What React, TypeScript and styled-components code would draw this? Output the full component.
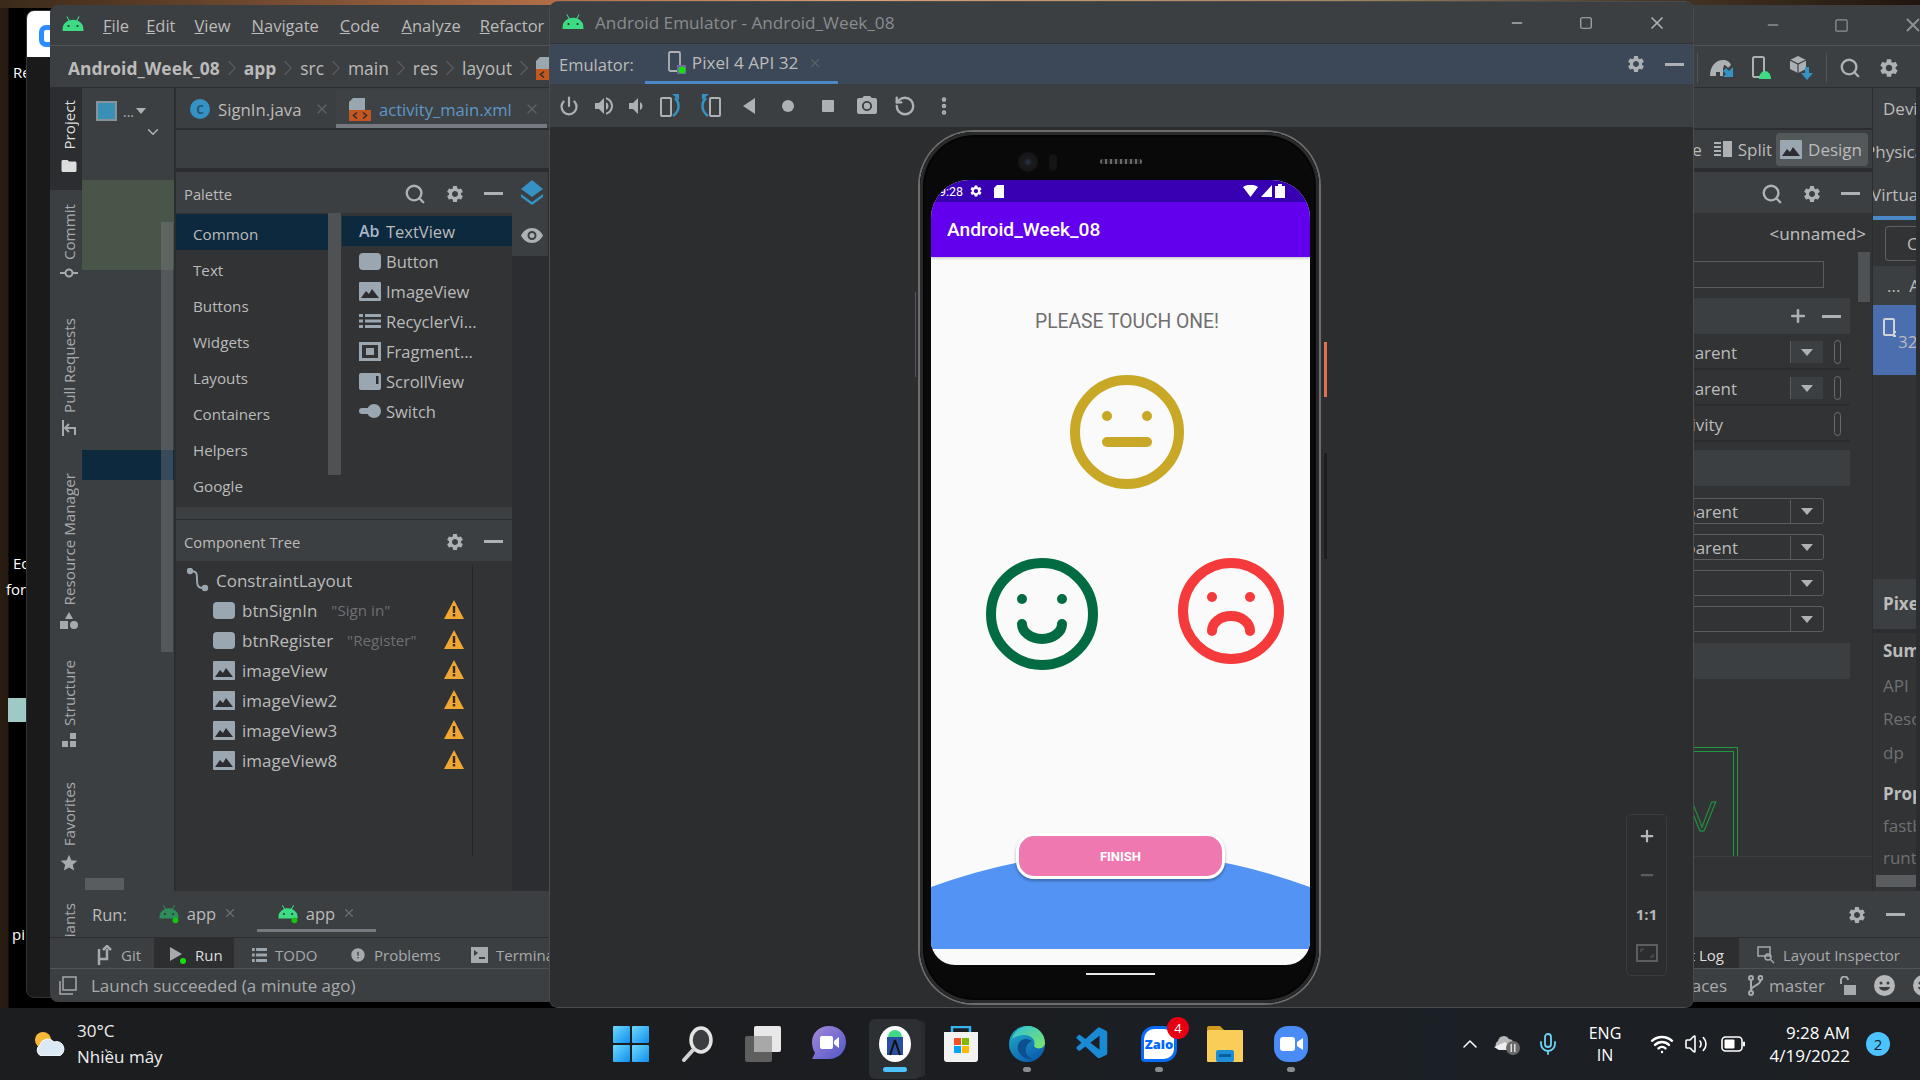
import React from 'react'
import styled, { createGlobalStyle } from 'styled-components'
import { Search, X, Minus, Plus, Square, ChevronRight, ChevronDown, ChevronUp, Power, RotateCcw, MoreVertical, Mic, Wifi, Volume2 } from 'lucide-react'
import { MdSettings, MdFolder, MdStar, MdVolumeUp, MdVolumeDown, MdPhotoCamera, MdError } from 'react-icons/md'
import { VscVscode } from 'react-icons/vsc'

const ui = '"Open Sans", "Noto Sans", "Liberation Sans", sans-serif'

const GlobalStyle = createGlobalStyle`
  html, body { margin: 0; padding: 0; background: #000; }
  body { width: 1920px; height: 1080px; overflow: hidden; font-family: ${ui}; }
  * { box-sizing: border-box; }
  svg { flex: none; }
`

const Screen = styled.div`
  width: 1920px;
  height: 1080px;
  display: flex;
  flex-direction: column;
  overflow: hidden;
`
const Desktop = styled.div`
  position: relative;
  flex: 1;
  overflow: hidden;
  background: linear-gradient(90deg, #2a1d12 0, #241a10 8px, #000 9px, #000 100%);
`
const Glow = styled.div`
  position: absolute;
  left: 0;
  top: 0;
  width: 100%;
  height: 8px;
  background: linear-gradient(90deg, #3a2a1a 0, #b5714a 30%, #d8a078 45%, #a58660 70%, #4a3a28 85%, #20160f 100%);
`
const DeskLabel = styled.span<{ $x: number; $y: number }>`
  position: absolute;
  left: ${(p) => p.$x}px;
  top: ${(p) => p.$y}px;
  color: #fff;
  font-size: 15px;
  line-height: 20px;
`
const DeskTile = styled.div`
  position: absolute;
  left: 8px;
  top: 698px;
  width: 18px;
  height: 24px;
  background: #9ec9c4;
`
const BackWindow = styled.div`
  position: absolute;
  left: 26px;
  top: 10px;
  width: 60px;
  height: 988px;
  border-radius: 8px;
  background: #1a1a1a;
  border: 1px solid #333;
  overflow: hidden;
`
const BackHead = styled.div`
  height: 46px;
  background: #fff;
  padding: 14px 0 0 12px;
`
const BackLogo = styled.div`
  width: 24px;
  height: 22px;
  border: 5px solid #2d8cff;
  border-radius: 7px;
`
const Window = styled.div`
  position: absolute;
  border-radius: 8px;
  overflow: hidden;
  display: flex;
  flex-direction: column;
  color: #bbb;
`
const IdeWindow = styled(Window)`
  left: 50px;
  top: 5px;
  width: 1880px;
  height: 997px;
  background: #3c3f41;
`
const EmuWindow = styled(Window)`
  left: 550px;
  top: 2px;
  width: 1143px;
  height: 1005px;
  background: #2b2d2f;
  box-shadow: 0 0 0 1px #4a4c4e;
`
const MenuBar = styled.div`
  height: 41px;
  display: flex;
  align-items: center;
  padding: 0 0 0 11px;
  border-bottom: 1px solid #515456;
  flex: none;
`
const MenuItem = styled.span<{ $left: number }>`
  margin-left: ${(p) => p.$left}px;
  font-size: 16.5px;
  color: #bbb;
  white-space: nowrap;
  &::first-letter { text-decoration: underline; }
`
const WinControls = styled.div`
  margin-left: auto;
  display: flex;
  align-items: center;
  gap: 53px;
  padding-right: 6px;
  flex: none;
  color: #8f9294;
`
const Crumbs = styled.div`
  height: 42px;
  display: flex;
  align-items: center;
  padding: 3px 0 0 18px;
  flex: none;
  font-size: 17.4px;
  border-bottom: 1px solid #2b2d30;
`
const Crumb = styled.span<{ $bold?: boolean }>`
  font-weight: ${(p) => (p.$bold ? 700 : 400)};
  color: #bbb;
  white-space: nowrap;
`
const Chevron = styled(ChevronRight)`
  color: #5b5e60;
  margin: 0 -1px;
`
const RightTools = styled.div`
  margin-left: auto;
  display: flex;
  align-items: center;
  height: 100%;
  width: 233px;
  color: #aeb1b3;
  flex: none;
`
const ToolSep = styled.div`
  width: 1px;
  height: 30px;
  background: #515456;
  flex: none;
`
const ToolItem = styled.span<{ $left: number }>`
  margin-left: ${(p) => p.$left}px;
  display: flex;
  flex: none;
`
const WhiteBit = styled.span`
  margin-left: 20px;
  width: 6px;
  height: 24px;
  background: #dfdfdf;
  flex: none;
`
const Workspace = styled.div`
  flex: 1;
  display: flex;
  min-height: 0;
`
const Rail = styled.div`
  width: 32px;
  flex: none;
  display: flex;
  flex-direction: column;
  overflow: hidden;
`
const RailTab = styled.div<{ $active?: boolean; $pad: number; $h: number }>`
  width: 100%;
  height: ${(p) => p.$h}px;
  flex: none;
  padding: ${(p) => p.$pad}px 0 0 5px;
  display: flex;
  flex-direction: column;
  align-items: center;
  gap: 7px;
  background: ${(p) => (p.$active ? '#2b2d30' : 'transparent')};
  color: ${(p) => (p.$active ? '#ddd' : '#a7aaac')};
`
const RailLabel = styled.span`
  writing-mode: vertical-rl;
  transform: rotate(180deg);
  font-size: 15.2px;
  line-height: 18px;
  white-space: nowrap;
`
const WorkMain = styled.div`
  flex: 1;
  min-width: 0;
  display: flex;
  flex-direction: column;
`
const Panels = styled.div`
  height: 803px;
  display: flex;
  background: #2b2d30;
  flex: none;
`
const ProjectPanel = styled.div`
  width: 92px;
  position: relative;
  flex: none;
  background: #3c3f41;
`
const ProjectBar = styled.div`
  height: 92px;
  display: flex;
  flex-direction: column;
  padding: 13px 8px 0 14px;
  color: #aeb1b3;
`
const ProjectTools = styled.div`
  display: flex;
  align-items: center;
  gap: 6px;
  font-size: 14px;
`
const ProjectMore = styled(ChevronDown)`
  align-self: flex-end;
  margin: 2px 4px 0 0;
`
const ProjectIcon = styled.div`
  width: 21px;
  height: 20px;
  border: 2px solid #87939a;
  background: #3a8fb7;
  flex: none;
`
const TinyCaret = styled.span`
  width: 0;
  height: 0;
  border-left: 5px solid transparent;
  border-right: 5px solid transparent;
  border-top: 6px solid #aeb1b3;
  margin-left: -4px;
`
const GreenBand = styled.div`
  height: 90px;
  background: #4a5549;
`
const SelBand = styled.div`
  height: 30px;
  margin-top: 180px;
  background: #0d293e;
`
const ProjectScroll = styled.div`
  position: absolute;
  left: 79px;
  top: 134px;
  width: 12px;
  height: 430px;
  background: rgba(120, 125, 128, 0.42);
`
const ProjectHScroll = styled.div`
  position: absolute;
  left: 3px;
  bottom: 1px;
  width: 39px;
  height: 12px;
  background: #5a5d5f;
`
const Editor = styled.div`
  flex: 1;
  min-width: 0;
  margin-left: 2px;
  display: flex;
  flex-direction: column;
  background: #3c3f41;
`
const TabBar = styled.div`
  height: 42px;
  display: flex;
  flex: none;
  padding-top: 2px;
  background: #3c3f41;
  border-bottom: 2px solid #2b2d30;
`
const Tab = styled.div<{ $active?: boolean; $w: number }>`
  width: ${(p) => p.$w}px;
  display: flex;
  align-items: center;
  padding: 4px 0 0 ${(p) => (p.$active ? 13 : 14)}px;
  gap: 8px;
  font-size: ${(p) => (p.$active ? 16.6 : 16.8)}px;
  color: ${(p) => (p.$active ? '#5d97c9' : '#bbb')};
  border-bottom: 4px solid ${(p) => (p.$active ? '#747a80' : 'transparent')};
  background: ${(p) => (p.$active ? '#3f4244' : 'transparent')};
  flex: none;
  white-space: nowrap;
`
const ClassBadge = styled.span`
  width: 20px;
  height: 20px;
  border-radius: 50%;
  background: #3592c4;
  color: #27566f;
  font-size: 12px;
  font-weight: 700;
  display: flex;
  align-items: center;
  justify-content: center;
  flex: none;
`
const TabClose = styled(X)`
  color: #5e6163;
  margin-left: 4px;
`
const SubBar = styled.div`
  height: 40px;
  flex: none;
  display: flex;
  align-items: center;
  justify-content: flex-end;
  padding: 0 4px 0 0;
  border-bottom: 2px solid #2b2d30;
  font-size: 17px;
`
const ModeBtn = styled.div<{ $active?: boolean }>`
  display: flex;
  align-items: center;
  gap: 6px;
  height: 33px;
  padding: ${(p) => (p.$active ? '0 6px 0 4px' : '0 4px 0 8px')};
  border-radius: 4px;
  background: ${(p) => (p.$active ? '#53585b' : 'transparent')};
  white-space: nowrap;
`
const DesignRow = styled.div`
  flex: 1;
  display: flex;
  min-height: 0;
  padding-top: 2px;
  background: #2b2d30;
`
const PaletteCol = styled.div`
  width: 336px;
  flex: none;
  display: flex;
  flex-direction: column;
  background: #313335;
`
const PanelHead = styled.div`
  height: 41px;
  flex: none;
  display: flex;
  align-items: center;
  padding: 2px 9px 0 8px;
  background: #3c3f41;
  color: #bbb;
  font-size: 14.8px;
  gap: 19px;
`
const HeadTitle = styled.span`
  margin-right: auto;
`
const Dash = styled.span`
  width: 19px;
  height: 3px;
  background: #aeb1b3;
  flex: none;
`
const PaletteBody = styled.div`
  height: 294px;
  flex: none;
  display: flex;
`
const CatList = styled.div`
  width: 152px;
  flex: none;
  padding-top: 1px;
  display: flex;
  flex-direction: column;
`
const Cat = styled.div<{ $active?: boolean }>`
  height: 36px;
  flex: none;
  display: flex;
  align-items: center;
  padding: 3px 0 0 17px;
  font-size: 15.2px;
  background: ${(p) => (p.$active ? '#0d293e' : 'transparent')};
`
const PalScroll = styled.div`
  width: 13px;
  height: 262px;
  flex: none;
  background: #4e5254;
`
const ItemList = styled.div`
  flex: 1;
  padding: 3px 0 0 1px;
  display: flex;
  flex-direction: column;
`
const Item = styled.div<{ $active?: boolean }>`
  height: 30px;
  flex: none;
  display: flex;
  align-items: center;
  padding-left: 17px;
  gap: 5px;
  font-size: 16.5px;
  white-space: nowrap;
  background: ${(p) => (p.$active ? '#0d293e' : 'transparent')};
`
const AbMark = styled.span`
  width: 22px;
  font-weight: 600;
  font-size: 16px;
  color: #a9b7c6;
`
const PalGap = styled.div`
  height: 13px;
  flex: none;
  background: #3c3f41;
  border-bottom: 1px solid #2b2d30;
`
const TreeBody = styled.div`
  flex: 1;
  padding: 4px 39px 35px 0;
`
const TreeInner = styled.div`
  height: 100%;
  border-right: 1px solid #232527;
`
const TreeRow = styled.div<{ $indent: number }>`
  height: 30px;
  display: flex;
  align-items: center;
  padding-left: ${(p) => p.$indent}px;
  gap: 7px;
  font-size: 17px;
  position: relative;
  white-space: nowrap;
`
const TreeHint = styled.span`
  font-size: 15.2px;
  color: #6e7072;
  margin-left: 7px;
`
const WarnSlot = styled.svg`
  position: absolute;
  left: 268px;
  top: 5px;
`
const IconCol = styled.div`
  width: 36px;
  flex: none;
  display: flex;
  flex-direction: column;
  background: #3c3f41;
  height: 84px;
  align-items: center;
  padding: 8px 0 0 3px;
  gap: 22px;
`
const Canvas = styled.div`
  flex: 1;
`
const AttrPanel = styled.div`
  width: 370px;
  flex: none;
  position: relative;
  display: flex;
  flex-direction: column;
  background: #313335;
`
const AttrHead = styled(PanelHead)`
  justify-content: flex-end;
  padding-right: 12px;
  gap: 19px;
`
const Unnamed = styled.div`
  height: 39px;
  flex: none;
  display: flex;
  align-items: center;
  justify-content: flex-end;
  padding: 2px 6px 0 0;
  font-size: 17px;
  font-family: "Noto Sans", sans-serif;
`
const AttrSearch = styled.div`
  height: 27px;
  margin: 9px 48px 0 0;
  flex: none;
  border: 1px solid #5a5d5f;
`
const AttrScroll = styled.div`
  position: absolute;
  right: 2px;
  top: 80px;
  width: 12px;
  height: 50px;
  background: #4e5254;
`
const Band = styled.div<{ $top: number }>`
  height: 36px;
  margin: ${(p) => p.$top}px 22px 0 0;
  background: #3c3f41;
  flex: none;
  display: flex;
  align-items: center;
  justify-content: flex-end;
  padding-right: 9px;
  gap: 14px;
  color: #aeb1b3;
`
const AttrRow = styled.div`
  height: 36px;
  margin-right: 22px;
  flex: none;
  display: flex;
  align-items: center;
  border-bottom: 2px solid #2b2d30;
  font-size: 17px;
  padding: 2px 0 0 125px;
`
const AttrValue = styled.span`
  width: 163px;
  flex: none;
`
const DropChip = styled.div`
  width: 33px;
  height: 22px;
  flex: none;
  background: #3c3f41;
  border-left: 1px solid #5a5d5f;
  display: flex;
  align-items: center;
  justify-content: center;
`
const NoChip = styled.span`
  width: 33px;
  flex: none;
`
const Caret = styled.span`
  width: 0;
  height: 0;
  border-left: 6px solid transparent;
  border-right: 6px solid transparent;
  border-top: 7px solid #aeb1b3;
`
const Pill = styled.span`
  width: 7px;
  height: 24px;
  margin-left: 11px;
  flex: none;
  border: 1px solid #6a6d6f;
  border-radius: 4px;
`
const SelectRow = styled.div<{ $top?: number }>`
  height: 26px;
  margin: ${(p) => p.$top ?? 10}px 48px 0 0;
  flex: none;
  display: flex;
  align-items: center;
  justify-content: space-between;
  padding: 1px 0 0 125px;
  border: 1px solid #5a5d5f;
  border-radius: 3px;
  font-size: 17px;
`
const SelectChip = styled(DropChip)`
  height: 100%;
  background: transparent;
`
const Blueprint = styled.div`
  position: absolute;
  left: 136px;
  top: 575px;
  width: 100px;
  height: 109px;
  border: 1px solid #1f9a3e;
  border-width: 1px 1px 0 0;
  &::after {
    content: '';
    position: absolute;
    left: 0;
    top: 3px;
    width: 95px;
    height: 105px;
    border: 1px solid #1f9a3e;
    border-width: 1px 1px 0 0;
  }
`
const BlueprintV = styled.span`
  position: absolute;
  left: 50px;
  top: 44px;
  font-size: 42px;
  line-height: 50px;
  font-family: "Liberation Sans", sans-serif;
  -webkit-text-stroke: 1px #1f9a3e;
  color: transparent;
`
const BottomLine = styled.div`
  position: absolute;
  left: 0;
  right: 0;
  top: 684px;
  height: 1px;
  background: #3c3f41;
`
const DevicePanel = styled.div`
  width: 43px;
  margin: 0 14px 0 1px;
  flex: none;
  display: flex;
  flex-direction: column;
  overflow: hidden;
  font-size: 17px;
  background: #313335;
  white-space: nowrap;
`
const DevLine = styled.div<{ $h: number; $dim?: boolean; $bold?: boolean; $x?: number; $band?: boolean }>`
  height: ${(p) => p.$h}px;
  line-height: ${(p) => p.$h}px;
  flex: none;
  text-indent: ${(p) => p.$x ?? 10}px;
  color: ${(p) => (p.$dim ? '#6e7072' : '#bbb')};
  font-weight: ${(p) => (p.$bold ? 700 : 400)};
  background: ${(p) => (p.$band ? '#3c3f41' : 'transparent')};
`
const DevUnder = styled.div`
  height: 4px;
  flex: none;
  background: #4a88c7;
`
const DevBtn = styled.div`
  height: 35px;
  margin: 6px 0 5px 12px;
  padding-left: 21px;
  flex: none;
  border: 1px solid #5e6163;
  border-right: 0;
  border-radius: 4px 0 0 4px;
  display: flex;
  align-items: center;
`
const DevSel = styled.div`
  height: 70px;
  flex: none;
  background: #4b6eaf;
  padding: 13px 0 0 10px;
  display: flex;
  gap: 2px;
  color: #bbb;
`
const DevSelNum = styled.span`
  margin-top: 12px;
`
const DevBlank = styled.div<{ $h: number; $dark?: boolean }>`
  height: ${(p) => p.$h}px;
  flex: none;
  background: ${(p) => (p.$dark ? '#2b2d30' : 'transparent')};
`
const DevScroll = styled.div`
  height: 12px;
  margin-left: 3px;
  flex: none;
  background: #5a5d5f;
`
const RunBar = styled.div`
  height: 39px;
  margin-top: 2px;
  flex: none;
  display: flex;
  align-items: center;
  padding-left: 10px;
  font-size: 16.5px;
`
const RunLabel = styled.span`
  padding-top: 4px;
`
const RunTab = styled.div<{ $active?: boolean; $left: number }>`
  margin-left: ${(p) => p.$left}px;
  height: 100%;
  width: 119px;
  padding: 4px 0 0 20px;
  flex: none;
  display: flex;
  align-items: center;
  gap: 7px;
  border-bottom: 3px solid ${(p) => (p.$active ? '#747a80' : 'transparent')};
`
const RunRight = styled.div`
  margin-left: auto;
  margin-right: 23px;
  padding-top: 4px;
  width: 60px;
  display: flex;
  align-items: center;
  gap: 19px;
  color: #aeb1b3;
`
const ToolStrip = styled.div`
  height: 32px;
  flex: none;
  display: flex;
  align-items: center;
  padding-left: 47px;
  font-size: 15px;
  border-top: 1px solid #2b2d30;
  border-bottom: 1px solid #515456;
  color: #a7aaac;
`
const ToolBtn = styled.div<{ $active?: boolean; $w: number; $pad?: number }>`
  width: ${(p) => p.$w}px;
  height: 100%;
  flex: none;
  display: flex;
  align-items: center;
  gap: 8px;
  padding: 3px 0 0 ${(p) => p.$pad ?? 0}px;
  background: ${(p) => (p.$active ? '#2c2e30' : 'transparent')};
  color: ${(p) => (p.$active ? '#ddd' : '#a7aaac')};
  white-space: nowrap;
`
const StripRight = styled.div`
  margin-left: auto;
  width: 280px;
  height: 100%;
  display: flex;
  align-items: center;
  padding-top: 3px;
`
const StripCell = styled.div`
  align-self: stretch;
  margin-top: -3px;
  width: 89px;
  padding: 3px 15px 0 0;
  background: #2c2e30;
  display: flex;
  align-items: center;
  justify-content: flex-end;
  color: #ddd;
  flex: none;
  white-space: nowrap;
  margin-right: 18px;
`
const StripText = styled.span`
  margin-left: 8px;
  white-space: nowrap;
`
const StatusBar = styled.div`
  height: 33px;
  flex: none;
  display: flex;
  align-items: center;
  padding: 0 0 0 9px;
  font-size: 17px;
  color: #a7aaac;
`
const StatusText = styled.span`
  margin-left: 14px;
`
const StatusRight = styled.div`
  margin-left: auto;
  width: 280px;
  display: flex;
  align-items: center;
  white-space: nowrap;
`
const SpacesText = styled.span`
  width: 77px;
  text-align: right;
  flex: none;
  margin-right: 21px;
`
const MasterText = styled.span`
  margin: 0 14px 0 6px;
`
const StatusFace = styled.span`
  margin-left: 18px;
  display: flex;
`
const EmuTitle = styled.div`
  height: 42px;
  flex: none;
  display: flex;
  align-items: center;
  padding-left: 11px;
  gap: 10px;
  font-size: 17.2px;
  color: #888c90;
  background: #3c3f41;
  border-bottom: 1px solid #323436;
`
const EmuWinCtl = styled.div`
  margin-left: auto;
  display: flex;
  align-items: center;
  gap: 54px;
  padding-right: 26px;
  color: #aeb1b3;
`
const EmuTabs = styled.div`
  height: 40px;
  flex: none;
  display: flex;
  align-items: center;
  padding-left: 9px;
  font-size: 16.5px;
  background: #3c4858;
  color: #bbb;
`
const EmuTab = styled.div`
  width: 193px;
  height: 100%;
  margin-left: 11px;
  padding-left: 23px;
  flex: none;
  display: flex;
  align-items: center;
  gap: 6px;
  font-size: 17.2px;
  white-space: nowrap;
  border-bottom: 3px solid #4a88c7;
`
const EmuTabRight = styled.div`
  margin-left: auto;
  padding-right: 9px;
  display: flex;
  align-items: center;
  gap: 19px;
  color: #aeb1b3;
`
const EmuTools = styled.div`
  height: 43px;
  flex: none;
  display: flex;
  align-items: center;
  padding-left: 8px;
  background: #3c3f41;
  color: #aeb1b3;
`
const ToolSlot = styled.span<{ $left?: number }>`
  width: 22px;
  height: 22px;
  margin-left: ${(p) => p.$left ?? 17}px;
  flex: none;
  display: flex;
  align-items: center;
  justify-content: center;
  color: #aeb1b3;
`
const DeviceArea = styled.div`
  flex: 1;
  position: relative;
  display: flex;
  justify-content: center;
  padding: 5px 4px 0 0;
  background: #2b2d2f;
  min-height: 0;
`
const ZoomBox = styled.div`
  position: absolute;
  right: 26px;
  top: 687px;
  width: 41px;
  height: 162px;
  border: 1px solid #3a3c3e;
  border-radius: 5px;
  display: flex;
  flex-direction: column;
  align-items: center;
  color: #b5b7b9;
`
const ZoomCell = styled.div<{ $dim?: boolean }>`
  height: 39px;
  flex: none;
  width: 100%;
  display: flex;
  align-items: center;
  justify-content: center;
  padding-top: 3px;
  font-size: 15px;
  font-weight: 700;
  color: ${(p) => (p.$dim ? '#5c5e60' : '#b5b7b9')};
`
const Phone = styled.div`
  position: relative;
  width: 399px;
  height: 871px;
  flex: none;
  padding: 48px 9px 0 11px;
  border-radius: 54px;
  background: #090909;
  box-shadow: 0 0 0 2px #6b6d6f, inset 0 0 0 3px #2a2a2b, inset 0 0 0 5px #050505;
`
const SideKey = styled.div<{ $top: number; $h: number; $orange?: boolean }>`
  position: absolute;
  left: 404px;
  top: ${(p) => p.$top}px;
  width: 3px;
  height: ${(p) => p.$h}px;
  background: ${(p) => (p.$orange ? '#df7150' : '#1c1d1e')};
`
const LeftEdge = styled.div`
  position: absolute;
  left: -5px;
  top: 160px;
  width: 1px;
  height: 85px;
  background: #55585a;
`
const Lens = styled.div`
  position: absolute;
  left: 98px;
  top: 20px;
  width: 20px;
  height: 20px;
  border-radius: 50%;
  background: radial-gradient(circle, #2a3550 0, #1a1a1c 30%, #121214 100%);
`
const LensTwo = styled.div`
  position: absolute;
  left: 129px;
  top: 22px;
  width: 8px;
  height: 17px;
  border-radius: 4px;
  background: #141416;
`
const Speaker = styled.div`
  position: absolute;
  left: 180px;
  top: 27px;
  width: 42px;
  height: 5px;
  border-radius: 3px;
  background: repeating-linear-gradient(90deg, #6a6a6a 0 2px, #1c1c1c 2px 5px);
`
const PhoneScreen = styled.div`
  width: 379px;
  height: 785px;
  border-radius: 38px 38px 24px 24px;
  overflow: hidden;
  display: flex;
  flex-direction: column;
  background: #fafafa;
  font-family: Roboto, sans-serif;
`
const AndroidStatus = styled.div`
  height: 22px;
  flex: none;
  background: #3700b3;
  color: #fff;
  display: flex;
  align-items: center;
  padding-left: 8px;
  font-size: 12.5px;
  gap: 6px;
`
const SdIcon = styled.svg`
  margin-left: 5px;
`
const StatusIcons = styled.div`
  margin-left: auto;
  padding-right: 25px;
  display: flex;
  align-items: center;
  gap: 3px;
`
const AppBar = styled.div`
  height: 55px;
  flex: none;
  background: #6200ee;
  color: #fff;
  display: flex;
  align-items: center;
  padding-left: 16px;
  font-size: 19.2px;
  font-weight: 500;
  box-shadow: 0 1px 3px rgba(0, 0, 0, 0.25);
`
const Content = styled.div`
  flex: 1;
  display: flex;
  flex-direction: column;
  align-items: center;
  padding: 54px 0 0 13px;
`
const Prompt = styled.div`
  font-size: 19.3px;
  line-height: 22px;
  color: #6f6f6f;
  white-space: nowrap;
`
const NeutralSlot = styled.div`
  margin-top: 42px;
  display: flex;
  flex: none;
`
const FaceRow = styled.div`
  align-self: flex-start;
  margin: 69px 0 0 42px;
  display: flex;
  align-items: flex-start;
  gap: 80px;
`
const Footer = styled.div`
  position: relative;
  height: 132px;
  flex: none;
  display: flex;
  justify-content: center;
  align-items: flex-start;
`
const Wave = styled.svg`
  position: absolute;
  left: 0;
  bottom: 16px;
`
const FinishBtn = styled.div`
  position: relative;
  width: 209px;
  height: 46px;
  background: #ef78b0;
  border: 3px solid #fff;
  border-radius: 18px;
  color: #fff;
  font-size: 13px;
  font-weight: 700;
  display: flex;
  align-items: center;
  justify-content: center;
  box-shadow: 0 2px 3px rgba(0, 0, 0, 0.3);
`
const NavBar = styled.div`
  height: 17px;
  display: flex;
  justify-content: center;
  padding-top: 8px;
  width: 379px;
`
const HomeLine = styled.div`
  width: 69px;
  height: 2px;
  background: #e8e8e8;
`
const Taskbar = styled.div`
  height: 72px;
  flex: none;
  position: relative;
  display: flex;
  align-items: center;
  background: linear-gradient(90deg, #1c1d1f 0, #1b1d20 50%, #1b2026 75%, #1d1f22 100%);
  color: #fff;
`
const Weather = styled.div`
  width: 613px;
  flex: none;
  display: flex;
  align-items: center;
  padding-left: 33px;
  gap: 12px;
`
const WeatherText = styled.div`
  font-size: 17px;
  line-height: 26px;
  color: #eee;
  white-space: nowrap;
`
const Apps = styled.div`
  display: flex;
  align-items: center;
  flex: none;
`
const AppSlot = styled.div<{ $w: number; $left?: number; $dot?: boolean; $active?: boolean }>`
  position: relative;
  width: ${(p) => p.$w}px;
  height: 36px;
  margin-left: ${(p) => p.$left ?? 0}px;
  flex: none;
  display: flex;
  align-items: center;
  justify-content: center;
  &::after {
    content: '';
    display: ${(p) => (p.$dot || p.$active ? 'block' : 'none')};
    position: absolute;
    left: 50%;
    bottom: -10px;
    width: ${(p) => (p.$active ? 24 : 8)}px;
    height: 5px;
    margin-left: ${(p) => (p.$active ? -12 : -4)}px;
    border-radius: 3px;
    background: ${(p) => (p.$active ? '#4cc2ff' : '#8a8c8e')};
  }
`
const ActiveTile = styled.div`
  position: absolute;
  left: 7px;
  top: -7px;
  width: 52px;
  height: 60px;
  border-radius: 6px;
  background: #2d3033;
  box-shadow: 6px 0 0 -2px #292b2e;
`
const StudioWrap = styled.span`
  position: relative;
  display: flex;
`
const Badge = styled.span`
  position: absolute;
  right: 3px;
  top: -9px;
  width: 22px;
  height: 22px;
  border-radius: 50%;
  background: #e60012;
  color: #fff;
  font-size: 13px;
  display: flex;
  align-items: center;
  justify-content: center;
`
const ZaloMark = styled.span`
  position: relative;
  color: #0068ff;
  font-weight: 800;
  font-size: 13px;
  display: flex;
  width: 36px;
  height: 36px;
  align-items: center;
  justify-content: center;
  background: #fff;
  border: 3px solid #0a6cf5;
  border-radius: 13px 13px 13px 4px;
`
const Tray = styled.div`
  margin-left: auto;
  display: flex;
  align-items: center;
  flex: none;
  width: 470px;
  color: #fff;
`
const TrayItem = styled.span<{ $left: number }>`
  margin-left: ${(p) => p.$left}px;
  display: flex;
  flex: none;
`
const Lang = styled.div`
  width: 50px;
  margin-left: 20px;
  text-align: center;
  font-size: 16px;
  line-height: 22px;
  flex: none;
`
const Clock = styled.div`
  width: 96px;
  margin-left: 9px;
  text-align: right;
  font-size: 17px;
  line-height: 23px;
  white-space: nowrap;
  flex: none;
`
const Notif = styled.div`
  width: 24px;
  height: 24px;
  margin-left: 16px;
  border-radius: 50%;
  background: #4cc2ff;
  color: #10202c;
  font-size: 15px;
  display: flex;
  align-items: center;
  justify-content: center;
  flex: none;
`

const Gear = ({ size = 20 }: { size?: number }) => <MdSettings size={size} color="#aeb1b3" />
const Find = ({ size = 22 }: { size?: number }) => <Search size={size} strokeWidth={2.6} color="#aeb1b3" />

const BtnIcon = () => (
  <svg width="22" height="17" viewBox="0 0 22 17"><rect width="22" height="17" rx="4" fill="#9aa7b0" /></svg>
)
const ImgIcon = () => (
  <svg width="22" height="19" viewBox="0 0 22 19">
    <rect width="22" height="19" rx="1" fill="#9aa7b0" />
    <path d="M2 16l5-7 3 3 3-5 7 9z" fill="#2b2d30" />
  </svg>
)
const ListIcon = ({ w = 22 }: { w?: number }) => (
  <svg width={w} height="16" viewBox="0 0 22 16" preserveAspectRatio="none" fill="#9aa7b0">
    <rect y="1" width="4" height="3" /><rect x="6" y="1" width="16" height="3" />
    <rect y="6.5" width="4" height="3" /><rect x="6" y="6.5" width="16" height="3" />
    <rect y="12" width="4" height="3" /><rect x="6" y="12" width="16" height="3" />
  </svg>
)
const FragIcon = () => (
  <svg width="22" height="19" viewBox="0 0 22 19" fill="#9aa7b0">
    <path fillRule="evenodd" d="M0 0h22v19H0zM3 3v13h16V3z" /><rect x="7" y="6" width="8" height="7" />
  </svg>
)
const ScrollIcon = () => (
  <svg width="22" height="17" viewBox="0 0 22 17"><rect width="22" height="17" rx="2" fill="#9aa7b0" /><rect x="17" y="3" width="2.5" height="8" fill="#2b2d30" /></svg>
)
const SwitchIcon = () => (
  <svg width="22" height="14" viewBox="0 0 22 14" fill="#9aa7b0"><rect y="4" width="12" height="6" rx="3" /><circle cx="15" cy="7" r="7" /></svg>
)
const TreeIcon = () => (
  <svg width="22" height="24" viewBox="0 0 22 24" fill="none" stroke="#9aa7b0" strokeWidth="2">
    <circle cx="3" cy="3" r="2.2" fill="#9aa7b0" /><circle cx="18" cy="20" r="2.2" fill="#9aa7b0" />
    <path d="M4 3c6 0 6 3 6 8s0 9 6 9" />
  </svg>
)
const Warn = () => (
  <WarnSlot width="20" height="19" viewBox="0 0 20 19">
    <path d="M10 0l10 19H0z" fill="#f0a732" />
    <rect x="8.8" y="6" width="2.4" height="7" fill="#3a2a10" /><rect x="8.8" y="14" width="2.4" height="2.4" fill="#3a2a10" />
  </WarnSlot>
)
const XmlIcon = () => (
  <svg width="22" height="23" viewBox="0 0 22 23">
    <path d="M4 0h12v12H0V4z" fill="#9aa7b0" />
    <rect y="12" width="22" height="11" fill="#c4561f" />
    <path d="M8 14.5L4.5 17.5 8 20.5M14 14.5l3.5 3-3.5 3" stroke="#2b2d30" strokeWidth="1.5" fill="none" />
  </svg>
)
const Robot = ({ size = 24, color = '#3ddc84', dot }: { size?: number; color?: string; dot?: boolean }) => (
  <svg width={size} height={size} viewBox="0 0 24 24">
    <path d="M6.3 3.2l2.3 4A10.6 10.6 0 0 1 12 6.700c1.200 0 2.400.2 3.400.5l2.300-4 .9.5-2.200 3.900A10.500 10.500 0 0 1 22.500 18H1.500A10.500 10.500 0 0 1 7.600 7.600L5.400 3.700z" fill={color} />
    <circle cx="7.500" cy="13" r="1.100" fill="#2b2d30" /><circle cx="16.500" cy="13" r="1.100" fill="#2b2d30" />
    {dot && <circle cx="19" cy="20" r="3.200" fill="#16c60c" />}
  </svg>
)
const PhoneIcon = ({ dot }: { dot?: boolean }) => (
  <svg width="18" height="24" viewBox="0 0 18 24" fill="none">
    <rect x="1" y="1" width="11" height="19" rx="1.500" stroke="#afb1b3" strokeWidth="1.800" />
    <rect x="9" y="14" width="9" height="9" fill="#7a62a8" />
    {dot && <circle cx="14" cy="19" r="3.500" fill="#16e00c" />}
  </svg>
)
const DevPhone = () => (
  <svg width="13" height="20" viewBox="0 0 13 20" fill="none"><rect x="1" y="1" width="10" height="16" rx="1" stroke="#d0d3d6" strokeWidth="2" /><rect x="10" y="13" width="3" height="2" fill="#d0d3d6" /><rect x="10" y="17" width="3" height="2" fill="#d0d3d6" /></svg>
)
const DualPhone = ({ flip }: { flip?: boolean }) => (
  <svg width="22" height="26" viewBox="0 0 22 26" fill="none" style={flip ? { transform: 'scaleX(-1)' } : undefined}>
    <rect x="1" y="5" width="10" height="18" rx="1" stroke="#aeb1b3" strokeWidth="2" />
    <path d="M15 5c5 5 5 13-2 18" stroke="#3592c4" strokeWidth="2.500" />
    <path d="M12 1h7v6z" fill="#3592c4" />
  </svg>
)
const GradleIcon = () => (
  <svg width="24" height="20" viewBox="0 0 24 20">
    <path d="M0 18C0 8 6 2 13 2c4 0 7 2 8 5l-3 3c-1-2-3-3-4-3l-1 4v7h-3v-4H6v4z" fill="#aeb1b3" />
    <path d="M23 9v10H13l3-3-3-3 3-3 3 3z" fill="#3592c4" />
  </svg>
)
const DeviceDroid = () => (
  <svg width="20" height="24" viewBox="0 0 20 24" fill="none">
    <rect x="1" y="1" width="11" height="20" rx="1.500" stroke="#aeb1b3" strokeWidth="2" />
    <path d="M7 23c0-5 3-8 6-8s6 3 6 8z" fill="#3ddc84" />
  </svg>
)
const BoxDown = () => (
  <svg width="24" height="24" viewBox="0 0 24 24">
    <path d="M8 0l8 4v9l-8 4-8-4V4z" fill="#aeb1b3" /><path d="M0 4l8 4 8-4M8 8v9" stroke="#3c3f41" strokeWidth="1.200" fill="none" />
    <path d="M15 11h4v6h4l-6 7-6-7h4z" fill="#3592c4" />
  </svg>
)

type Face = 'neutral' | 'smile' | 'frown'
const FaceIcon = ({ kind, size, color }: { kind: Face; size: number; color: string }) => {
  const c = size / 2
  const eyeY = c - (kind === 'frown' ? 14 : kind === 'smile' ? 15 : 16)
  const eyeX = kind === 'frown' ? 19 : 20
  return (
    <svg width={size} height={size} viewBox={`0 0 ${size} ${size}`} fill="none" stroke={color} strokeWidth="10" strokeLinecap="round">
      <circle cx={c} cy={c} r={c - 5} />
      <circle cx={c - eyeX} cy={eyeY} r="5" fill={color} stroke="none" />
      <circle cx={c + eyeX} cy={eyeY} r="5" fill={color} stroke="none" />
      {kind === 'neutral' && <path d={`M${c - 20} ${c + 10}H${c + 20}`} />}
      {kind === 'smile' && <path d={`M${c - 20} ${c + 10}a20 15 0 0 0 40 0`} />}
      {kind === 'frown' && <path d={`M${c - 19} ${c + 20}a19 15 0 0 1 38 0`} />}
    </svg>
  )
}

const WinLogo = () => (
  <svg width="36" height="36" viewBox="0 0 36 36">
    <defs><linearGradient id="wl" x1="0" y1="0" x2="1" y2="1"><stop offset="0" stopColor="#6fd9fc" /><stop offset="1" stopColor="#0f8ef0" /></linearGradient></defs>
    <rect width="17" height="17" x="0" y="0" fill="url(#wl)" rx="1" /><rect width="17" height="17" x="19" y="0" fill="url(#wl)" rx="1" />
    <rect width="17" height="17" x="0" y="19" fill="url(#wl)" rx="1" /><rect width="17" height="17" x="19" y="19" fill="url(#wl)" rx="1" />
  </svg>
)
const SearchGlyph = () => (
  <svg width="33" height="36" viewBox="0 0 33 36" fill="none">
    <ellipse cx="20" cy="14" rx="10" ry="12" fill="#3b3d40" stroke="#e4e4e4" strokeWidth="3.500" />
    <path d="M12 24L3 34" stroke="#d0d0d0" strokeWidth="4" strokeLinecap="round" />
  </svg>
)
const TaskView = () => (
  <svg width="36" height="36" viewBox="0 0 36 36">
    <rect x="0" y="10" width="27" height="26" rx="2" fill="#5e5e5e" />
    <rect x="9" y="0" width="27" height="26" rx="2" fill="#e8e8e8" />
    <rect x="9" y="10" width="18" height="16" fill="#a8a8a8" />
  </svg>
)
const ChatIcon = () => (
  <svg width="34" height="36" viewBox="0 0 34 36">
    <defs><linearGradient id="ch" x1="0" y1="0" x2="1" y2="1"><stop offset="0" stopColor="#a687d8" /><stop offset="1" stopColor="#4f58ca" /></linearGradient></defs>
    <path d="M17 0c10 0 17 7 17 16s-7 17-17 17H0l3-6C1 24 0 20 0 16 0 7 7 0 17 0z" fill="url(#ch)" />
    <rect x="8" y="10" width="13" height="13" rx="2" fill="#fff" /><path d="M22 15l5-4v11l-5-4z" fill="#fff" />
  </svg>
)
const StudioIcon = () => (
  <svg width="32" height="36" viewBox="0 0 32 36">
    <ellipse cx="16" cy="18" rx="16" ry="18" fill="#fff" />
    <rect x="8" y="11" width="16" height="18" fill="#2a4ea0" />
    <path d="M9 11a7 7 0 0 1 14 0z" fill="#3ddc84" />
    <path d="M16 14l-5 15M16 14l5 15" stroke="#111" strokeWidth="2" />
  </svg>
)
const StoreIcon = () => (
  <svg width="34" height="36" viewBox="0 0 34 36">
    <path d="M8 6V1h18v5" fill="none" stroke="#37b3f0" strokeWidth="2.500" />
    <path d="M0 6h34v27a3 3 0 0 1-3 3H3a3 3 0 0 1-3-3z" fill="#f2f2f2" />
    <rect x="10" y="12" width="7" height="7" fill="#f25022" /><rect x="18" y="12" width="7" height="7" fill="#7fba00" />
    <rect x="10" y="20" width="7" height="7" fill="#00a4ef" /><rect x="18" y="20" width="7" height="7" fill="#ffb900" />
  </svg>
)
const EdgeIcon = () => (
  <svg width="36" height="36" viewBox="0 0 36 36">
    <defs>
      <linearGradient id="eb" x1="0" y1="0" x2="0.6" y2="1"><stop offset="0" stopColor="#22b3c8" /><stop offset="1" stopColor="#0b5fb0" /></linearGradient>
      <linearGradient id="eg" x1="0" y1="0" x2="1" y2="1"><stop offset="0" stopColor="#2fc2d6" /><stop offset="1" stopColor="#7ee56a" /></linearGradient>
    </defs>
    <circle cx="18" cy="18" r="18" fill="url(#eb)" />
    <path d="M3 13C6 4 13 0 19 0c10 0 17 8 17 17 0 6-9 7-11 3 2-6-3-11-9-11-6 0-11 2-13 4z" fill="url(#eg)" />
    <path d="M17 13c-6 0-9 5-8 11 2 6 8 10 15 9-6-2-8-6-7-11 1-4 3-6 6-7-2-1-4-2-6-2z" fill="#0d4f8f" />
  </svg>
)
const FolderIcon = () => (
  <svg width="36" height="36" viewBox="0 0 36 36">
    <path d="M0 2a2 2 0 0 1 2-2h11l4 4H0z" fill="#d29a1d" />
    <rect y="4" width="36" height="32" rx="1" fill="#f9cd57" />
    <rect x="9" y="24" width="18" height="12" rx="2" fill="#1c8fd8" />
    <rect x="12" y="28" width="12" height="3" fill="#0c5f9e" />
  </svg>
)
const ZoomIcon = () => (
  <svg width="34" height="36" viewBox="0 0 34 36">
    <rect width="34" height="36" rx="14" fill="#4a8cf7" />
    <rect x="6" y="11" width="15" height="14" rx="3" fill="#fff" /><path d="M23 16l6-4v12l-6-4z" fill="#fff" />
  </svg>
)
const WeatherIcon = () => (
  <svg width="32" height="24" viewBox="0 0 32 24">
    <circle cx="10" cy="8" r="8" fill="#f5b93a" />
    <path d="M9 24a6 6 0 0 1-2-11 8 8 0 0 1 14-3 7 7 0 0 1 5 14z" fill="#dbe9f5" stroke="#fff" />
  </svg>
)
const CloudPause = () => (
  <svg width="26" height="22" viewBox="0 0 26 22">
    <path d="M5 17a5 5 0 0 1-1-9 6 6 0 0 1 11-2 5 5 0 0 1 4 8v3z" fill="#b8b8b8" />
    <path d="M0 14l11-5 8 8H5z" fill="#eee" />
    <circle cx="19" cy="15" r="7" fill="#6a6a6a" />
    <rect x="16.500" y="11" width="1.500" height="8" fill="#ddd" /><rect x="20" y="11" width="1.500" height="8" fill="#ddd" />
  </svg>
)
const BatteryIcon = () => (
  <svg width="24" height="16" viewBox="0 0 24 16" fill="none">
    <rect x="1" y="1" width="20" height="14" rx="3.500" stroke="#fff" strokeWidth="1.600" />
    <rect x="3.500" y="3.500" width="10" height="9" rx="1" fill="#fff" /><rect x="22" y="5.500" width="2" height="5" rx="1" fill="#fff" />
  </svg>
)
const EyeIcon = () => (
  <svg width="22" height="15" viewBox="0 0 22 15"><path fillRule="evenodd" d="M11 0c5 0 9 3.500 11 7.500C20 11.500 16 15 11 15S2 11.500 0 7.500C2 3.500 6 0 11 0zm0 3a4.500 4.500 0 1 0 0 9 4.500 4.500 0 0 0 0-9zm0 2a2.500 2.500 0 1 1 0 5 2.500 2.500 0 0 1 0-5z" fill="#aeb1b3" /></svg>
)
const LayersIcon = () => (
  <svg width="24" height="26" viewBox="0 0 24 26"><path d="M12 0l11 9-11 8L1 9z" fill="#3592c4" /><path d="M1 14l11 8 11-8v3l-11 8-11-8z" fill="#3592c4" /></svg>
)
const OpenLock = () => (
  <svg width="17" height="19" viewBox="0 0 17 19" fill="none"><path d="M2 8V4a3.500 3.500 0 0 1 7 0" stroke="#a7aaac" strokeWidth="2" /><rect x="5" y="9" width="12" height="10" fill="#a7aaac" /></svg>
)
const BranchIcon = () => (
  <svg width="15" height="21" viewBox="0 0 15 21" fill="none" stroke="#a7aaac" strokeWidth="2"><circle cx="3" cy="3" r="2" /><circle cx="3" cy="18" r="2" /><circle cx="12.500" cy="3" r="2" /><path d="M3 5v11M12.500 5c0 6-9 5-9.500 10" /></svg>
)
const SmileSmall = () => (
  <svg width="21" height="21" viewBox="0 0 21 21" fill="#b5b7b9"><path fillRule="evenodd" d="M10.500 0a10.500 10.500 0 1 1 0 21 10.500 10.500 0 0 1 0-21zM7 6.500a1.500 1.500 0 1 0 0 3 1.500 1.500 0 0 0 0-3zm7 0a1.500 1.500 0 1 0 0 3 1.500 1.500 0 0 0 0-3zM5 12c1 5 10 5 11 0z" /></svg>
)

const paletteCats = ['Common', 'Text', 'Buttons', 'Widgets', 'Layouts', 'Containers', 'Helpers', 'Google']
const paletteItems: [React.ReactNode, string][] = [
  [<BtnIcon key="b" />, 'Button'],
  [<ImgIcon key="i" />, 'ImageView'],
  [<ListIcon key="l" />, 'RecyclerVi...'],
  [<FragIcon key="f" />, 'Fragment...'],
  [<ScrollIcon key="s" />, 'ScrollView'],
  [<SwitchIcon key="w" />, 'Switch'],
]
const treeRows: [string, string?][] = [
  ['btnSignIn', '"Sign in"'],
  ['btnRegister', '"Register"'],
  ['imageView'],
  ['imageView2'],
  ['imageView3'],
  ['imageView8'],
]

export default function App() {
  return (
    <Screen>
      <GlobalStyle />
      <Desktop>
        <Glow />
        <DeskLabel $x={13} $y={62}>Re</DeskLabel>
        <DeskLabel $x={13} $y={553}>Ed</DeskLabel>
        <DeskLabel $x={6} $y={579}>for</DeskLabel>
        <DeskLabel $x={12} $y={924}>pi</DeskLabel>
        <DeskTile />
        <BackWindow>
          <BackHead><BackLogo /></BackHead>
        </BackWindow>

        <IdeWindow>
          <MenuBar>
            <Robot size={24} />
            <MenuItem $left={18}>File</MenuItem>
            <MenuItem $left={17}>Edit</MenuItem>
            <MenuItem $left={19}>View</MenuItem>
            <MenuItem $left={21}>Navigate</MenuItem>
            <MenuItem $left={21}>Code</MenuItem>
            <MenuItem $left={22}>Analyze</MenuItem>
            <MenuItem $left={19}>Refactor</MenuItem>
            <WinControls>
              <Minus size={16} />
              <Square size={15} />
              <X size={22} />
            </WinControls>
          </MenuBar>
          <Crumbs>
            <Crumb $bold>Android_Week_08</Crumb><Chevron size={26} strokeWidth={1} />
            <Crumb $bold>app</Crumb><Chevron size={26} strokeWidth={1} />
            <Crumb>src</Crumb><Chevron size={26} strokeWidth={1} />
            <Crumb>main</Crumb><Chevron size={26} strokeWidth={1} />
            <Crumb>res</Crumb><Chevron size={26} strokeWidth={1} />
            <Crumb>layout</Crumb><Chevron size={26} strokeWidth={1} />
            <XmlIcon />
            <RightTools>
              <ToolSep />
              <ToolItem $left={12}><GradleIcon /></ToolItem>
              <ToolItem $left={18}><DeviceDroid /></ToolItem>
              <ToolItem $left={18}><BoxDown /></ToolItem>
              <ToolItem $left={12}><ToolSep /></ToolItem>
              <ToolItem $left={12}><Find /></ToolItem>
              <ToolItem $left={17}><Gear size={22} /></ToolItem>
              <WhiteBit />
            </RightTools>
          </Crumbs>
          <Workspace>
            <Rail>
              <RailTab $active $pad={12} $h={102}><RailLabel>Project</RailLabel><MdFolder size={18} /></RailTab>
              <RailTab $pad={14} $h={128}><RailLabel>Commit</RailLabel><svg width="18" height="12" viewBox="0 0 18 12" fill="none" stroke="#a7aaac" strokeWidth="2"><circle cx="9" cy="6" r="3.500" /><path d="M0 6h5M13 6h5" /></svg></RailTab>
              <RailTab $pad={0} $h={155}><RailLabel>Pull Requests</RailLabel><svg width="16" height="16" viewBox="0 0 16 16" fill="none" stroke="#a7aaac" strokeWidth="2"><path d="M2 0v16M14 15V8H5M8 4L4 8l4 4" /></svg></RailTab>
              <RailTab $pad={0} $h={187}><RailLabel>Resource Manager</RailLabel><svg width="18" height="18" viewBox="0 0 18 18" fill="#a7aaac"><path d="M9 0l4 7H5z" /><rect y="9" width="8" height="8" /><circle cx="14" cy="13" r="4" /></svg></RailTab>
              <RailTab $pad={0} $h={122}><RailLabel>Structure</RailLabel><svg width="14" height="14" viewBox="0 0 14 14" fill="#a7aaac"><rect x="8" width="6" height="6" /><rect y="8" width="6" height="6" /><rect x="8" y="8" width="6" height="6" /></svg></RailTab>
              <RailTab $pad={0} $h={121}><RailLabel>Favorites</RailLabel><MdStar size={20} /></RailTab>
              <RailTab $pad={0} $h={33}><RailLabel>iants</RailLabel></RailTab>
            </Rail>
            <WorkMain>
              <Panels>
                <ProjectPanel>
                  <ProjectBar>
                    <ProjectTools>
                      <ProjectIcon />
                      <span>...</span>
                      <TinyCaret />
                    </ProjectTools>
                    <ProjectMore size={18} />
                  </ProjectBar>
                  <GreenBand />
                  <SelBand />
                  <ProjectScroll />
                  <ProjectHScroll />
                </ProjectPanel>
                <Editor>
                  <TabBar>
                    <Tab $w={160}>
                      <ClassBadge>C</ClassBadge>SignIn.java<TabClose size={16} />
                    </Tab>
                    <Tab $active $w={211}>
                      <XmlIcon />activity_main.xml<TabClose size={16} />
                    </Tab>
                  </TabBar>
                  <SubBar>
                    <ModeBtn>Code</ModeBtn>
                    <ModeBtn><svg width="18" height="16" viewBox="0 0 18 16" fill="#aeb1b3"><path d="M0 1h7v2H0zM0 5h7v2H0zM0 9h7v2H0zM0 13h7v2H0zM9 0h9v16H9z" /></svg>Split</ModeBtn>
                    <ModeBtn $active><ImgIcon />Design</ModeBtn>
                  </SubBar>
                  <DesignRow>
                    <PaletteCol>
                      <PanelHead>
                        <HeadTitle>Palette</HeadTitle>
                        <Find />
                        <Gear />
                        <Dash />
                      </PanelHead>
                      <PaletteBody>
                        <CatList>
                          {paletteCats.map((c, i) => (
                            <Cat key={c} $active={i === 0}>{c}</Cat>
                          ))}
                        </CatList>
                        <PalScroll />
                        <ItemList>
                          <Item $active><AbMark>Ab</AbMark>TextView</Item>
                          {paletteItems.map(([icon, label]) => (
                            <Item key={label}>{icon}{label}</Item>
                          ))}
                        </ItemList>
                      </PaletteBody>
                      <PalGap />
                      <PanelHead>
                        <HeadTitle>Component Tree</HeadTitle>
                        <Gear />
                        <Dash />
                      </PanelHead>
                      <TreeBody>
                        <TreeInner>
                          <TreeRow $indent={11}><TreeIcon />ConstraintLayout</TreeRow>
                          {treeRows.map(([name, hint]) => (
                            <TreeRow key={name} $indent={37}>
                              {name.startsWith('btn') ? <BtnIcon /> : <ImgIcon />}
                              {name}
                              {hint && <TreeHint>{hint}</TreeHint>}
                              <Warn />
                            </TreeRow>
                          ))}
                        </TreeInner>
                      </TreeBody>
                    </PaletteCol>
                    <IconCol>
                      <LayersIcon />
                      <EyeIcon />
                    </IconCol>
                    <Canvas />
                    <AttrPanel>
                      <AttrHead>
                        <Find />
                        <Gear />
                        <Dash />
                      </AttrHead>
                      <Unnamed>&lt;unnamed&gt;</Unnamed>
                      <AttrSearch />
                      <AttrScroll />
                      <Band $top={10}><Plus size={20} strokeWidth={3} /><Dash /></Band>
                      <AttrRow><AttrValue>match_parent</AttrValue><DropChip><Caret /></DropChip><Pill /></AttrRow>
                      <AttrRow><AttrValue>match_parent</AttrValue><DropChip><Caret /></DropChip><Pill /></AttrRow>
                      <AttrRow><AttrValue>MainActivity</AttrValue><NoChip /><Pill /></AttrRow>
                      <Band $top={8} />
                      <SelectRow $top={12}>match_parent<SelectChip><Caret /></SelectChip></SelectRow>
                      <SelectRow>match_parent<SelectChip><Caret /></SelectChip></SelectRow>
                      <SelectRow><span /><SelectChip><Caret /></SelectChip></SelectRow>
                      <SelectRow><span /><SelectChip><Caret /></SelectChip></SelectRow>
                      <Band $top={11} />
                      <Blueprint><BlueprintV>V</BlueprintV></Blueprint>
                      <BottomLine />
                    </AttrPanel>
                  </DesignRow>
                </Editor>
                <DevicePanel>
                  <DevLine $band $h={42}>Device</DevLine>
                  <DevLine $band $h={44} $x={-8}>Physical</DevLine>
                  <DevLine $band $h={42} $x={-2}>Virtual</DevLine>
                  <DevUnder />
                  <DevBtn>C</DevBtn>
                  <DevLine $band $h={39} $x={14}>...&nbsp;&nbsp;A</DevLine>
                  <DevSel><DevPhone /><DevSelNum>32</DevSelNum></DevSel>
                  <DevBlank $h={204} />
                  <DevLine $band $h={50} $bold>Pixel</DevLine>
                  <DevBlank $h={4} $dark />
                  <DevLine $h={36} $bold>Sum</DevLine>
                  <DevLine $h={33} $dim>API</DevLine>
                  <DevLine $h={34} $dim>Reso</DevLine>
                  <DevLine $h={33} $dim>dp</DevLine>
                  <DevBlank $h={8} />
                  <DevLine $h={34} $bold>Prop</DevLine>
                  <DevLine $h={30} $dim>fastb</DevLine>
                  <DevLine $h={34} $dim>runt</DevLine>
                  <DevScroll />
                </DevicePanel>
              </Panels>
              <RunBar>
                <RunLabel>Run:</RunLabel>
                <RunTab $left={11}><Robot size={22} color="#2f8a5c" dot />app<X size={14} color="#6b6e70" /></RunTab>
                <RunTab $active $left={0}><Robot size={22} dot />app<X size={14} color="#6b6e70" /></RunTab>
                <RunRight><Gear /><Dash /></RunRight>
              </RunBar>
            </WorkMain>
          </Workspace>
          <ToolStrip>
            <ToolBtn $w={57}><svg width="16" height="20" viewBox="0 0 16 20" fill="none" stroke="#a7aaac" strokeWidth="2.500"><path d="M2 20V4M2 14h8V4" /><path d="M6 5l4-4 4 4" /></svg>Git</ToolBtn>
            <ToolBtn $active $w={80} $pad={15}><svg width="18" height="18" viewBox="0 0 18 18"><path d="M1 1l12 7-12 7z" fill="#a7aaac" /><circle cx="14" cy="15" r="3" fill="#16e00c" /></svg>Run</ToolBtn>
            <ToolBtn $w={116} $pad={18}><ListIcon w={15} />TODO</ToolBtn>
            <ToolBtn $w={121}><MdError size={16} />Problems</ToolBtn>
            <ToolBtn $w={120}><svg width="17" height="16" viewBox="0 0 17 16" fill="#a7aaac"><path fillRule="evenodd" d="M0 0h17v16H0zM3 3l4 3-4 3zM8 10v2h6v-2z" /></svg>Terminal</ToolBtn>
            <StripRight>
              <StripCell>Event Log</StripCell>
              <svg width="18" height="18" viewBox="0 0 18 18" fill="none" stroke="#a7aaac" strokeWidth="1.500"><rect x="1" y="1" width="12" height="9" /><circle cx="11" cy="11" r="3" /><path d="M13 13l4 4" /></svg>
              <StripText>Layout Inspector</StripText>
            </StripRight>
          </ToolStrip>
          <StatusBar>
            <svg width="18" height="19" viewBox="0 0 18 19" fill="none" stroke="#a7aaac" strokeWidth="1.500"><rect x="4" y="1" width="13" height="13" /><path d="M1 5v13h13" /></svg>
            <StatusText>Launch succeeded (a minute ago)</StatusText>
            <StatusRight>
              <SpacesText>4 spaces</SpacesText>
              <BranchIcon />
              <MasterText>master</MasterText>
              <OpenLock />
              <StatusFace><SmileSmall /></StatusFace>
              <StatusFace><SmileSmall /></StatusFace>
            </StatusRight>
          </StatusBar>
        </IdeWindow>

        <EmuWindow>
          <EmuTitle>
            <Robot size={24} />
            Android Emulator - Android_Week_08
            <EmuWinCtl>
              <Minus size={16} />
              <Square size={14} />
              <X size={20} />
            </EmuWinCtl>
          </EmuTitle>
          <EmuTabs>
            Emulator:
            <EmuTab><PhoneIcon dot />Pixel 4 API 32<TabClose size={14} /></EmuTab>
            <EmuTabRight><Gear /><Dash /></EmuTabRight>
          </EmuTabs>
          <EmuTools>
            <ToolSlot $left={0}><Power size={20} strokeWidth={2.600} /></ToolSlot>
            <ToolSlot $left={13}><MdVolumeUp size={24} /></ToolSlot>
            <ToolSlot $left={10}><MdVolumeDown size={24} /></ToolSlot>
            <ToolSlot $left={13}><DualPhone /></ToolSlot>
            <ToolSlot><DualPhone flip /></ToolSlot>
            <ToolSlot><svg width="12" height="16" viewBox="0 0 12 16" fill="#aeb1b3"><path d="M12 0v16L0 8z" /></svg></ToolSlot>
            <ToolSlot><svg width="12" height="12" viewBox="0 0 12 12" fill="#aeb1b3"><circle cx="6" cy="6" r="6" /></svg></ToolSlot>
            <ToolSlot $left={18}><svg width="12" height="12" viewBox="0 0 12 12" fill="#aeb1b3"><rect width="12" height="12" rx="1" /></svg></ToolSlot>
            <ToolSlot><MdPhotoCamera size={24} /></ToolSlot>
            <ToolSlot $left={16}><RotateCcw size={22} strokeWidth={2.600} /></ToolSlot>
            <ToolSlot><MoreVertical size={22} strokeWidth={3} /></ToolSlot>
          </EmuTools>
          <DeviceArea>
            <Phone>
              <LeftEdge />
              <SideKey $orange $top={210} $h={55} />
              <SideKey $top={321} $h={106} />
              <Lens />
              <LensTwo />
              <Speaker />
              <PhoneScreen>
                <AndroidStatus>
                  <span>9:28</span>
                  <MdSettings size={14} />
                  <SdIcon width="10" height="13" viewBox="0 0 10 13" fill="#fff"><path d="M3 0h7v13H0V3z" /></SdIcon>
                  <StatusIcons>
                    <svg width="15" height="12" viewBox="0 0 15 12" fill="#fff"><path d="M0 2c4-3 11-3 15 0L7.500 12z" /></svg>
                    <svg width="11" height="12" viewBox="0 0 11 12" fill="#fff"><path d="M11 0v12H0z" /></svg>
                    <svg width="10" height="14" viewBox="0 0 10 14" fill="#fff"><path d="M3 0h4v2h3v12H0V2h3z" /></svg>
                  </StatusIcons>
                </AndroidStatus>
                <AppBar>Android_Week_08</AppBar>
                <Content>
                  <Prompt>PLEASE TOUCH ONE!</Prompt>
                  <NeutralSlot><FaceIcon kind="neutral" size={114} color="#c9a727" /></NeutralSlot>
                  <FaceRow>
                    <FaceIcon kind="smile" size={112} color="#036b41" />
                    <FaceIcon kind="frown" size={106} color="#f43a3a" />
                  </FaceRow>
                </Content>
                <Footer>
                  <Wave width="379" height="97" viewBox="0 0 379 97"><path d="M0 35Q189.500 -34.500 379 35V97H0z" fill="#5293f4" /></Wave>
                  <FinishBtn>FINISH</FinishBtn>
                </Footer>
              </PhoneScreen>
              <NavBar><HomeLine /></NavBar>
            </Phone>
            <ZoomBox>
              <ZoomCell><Plus size={18} strokeWidth={3} /></ZoomCell>
              <ZoomCell $dim><Minus size={18} strokeWidth={3} /></ZoomCell>
              <ZoomCell>1:1</ZoomCell>
              <ZoomCell $dim><svg width="22" height="18" viewBox="0 0 22 18" fill="none" stroke="#5c5e60" strokeWidth="2"><rect x="1" y="1" width="20" height="16" /><path d="M5 8V5h3M17 10v3h-3" strokeWidth="1" /></svg></ZoomCell>
            </ZoomBox>
          </DeviceArea>
        </EmuWindow>
      </Desktop>
      <Taskbar>
        <Weather>
          <WeatherIcon />
          <WeatherText>30°C<br />Nhiều mây</WeatherText>
        </Weather>
        <Apps>
          <AppSlot $w={35}><WinLogo /></AppSlot>
          <AppSlot $w={34} $left={32}><SearchGlyph /></AppSlot>
          <AppSlot $w={36} $left={31}><TaskView /></AppSlot>
          <AppSlot $w={34} $left={31}><ChatIcon /></AppSlot>
          <AppSlot $w={66} $active $left={16}><ActiveTile /><StudioWrap><StudioIcon /></StudioWrap></AppSlot>
          <AppSlot $w={66}><StoreIcon /></AppSlot>
          <AppSlot $w={66} $dot><EdgeIcon /></AppSlot>
          <AppSlot $w={66}><VscVscode size={38} color="#1a8ad4" /></AppSlot>
          <AppSlot $w={66} $dot><ZaloMark>Zalo</ZaloMark><Badge>4</Badge></AppSlot>
          <AppSlot $w={66}><FolderIcon /></AppSlot>
          <AppSlot $w={66} $dot><ZoomIcon /></AppSlot>
        </Apps>
        <Tray>
          <TrayItem $left={8}><ChevronUp size={24} strokeWidth={1.500} /></TrayItem>
          <TrayItem $left={12}><CloudPause /></TrayItem>
          <TrayItem $left={16}><Mic size={24} color="#6fd3f5" strokeWidth={1.800} /></TrayItem>
          <Lang>ENG<br />IN</Lang>
          <TrayItem $left={20}><Wifi size={24} strokeWidth={2.400} /></TrayItem>
          <TrayItem $left={10}><Volume2 size={24} strokeWidth={1.600} /></TrayItem>
          <TrayItem $left={13}><BatteryIcon /></TrayItem>
          <Clock>9:28 AM<br />4/19/2022</Clock>
          <Notif>2</Notif>
        </Tray>
      </Taskbar>
    </Screen>
  )
}
